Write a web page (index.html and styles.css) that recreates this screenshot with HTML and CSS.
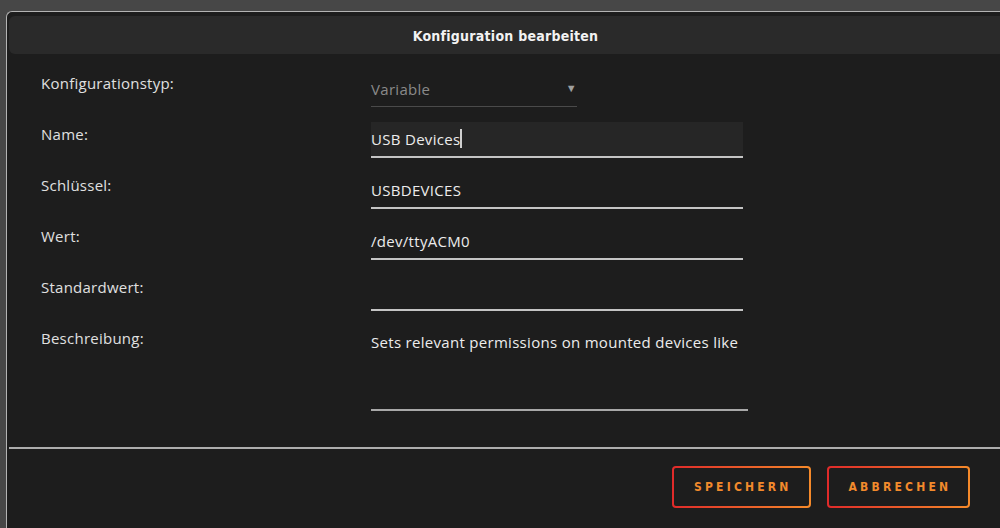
FILE: index.html
```html
<!DOCTYPE html>
<html lang="de">
<head>
<meta charset="utf-8">
<title>Konfiguration bearbeiten</title>
<link rel="stylesheet" href="styles.css">
</head>
<body>
  <div class="dialog">
    <div class="dialog-header">Konfiguration bearbeiten</div>
    <form class="form">
      <div class="row">
        <label class="label">Konfigurationstyp:</label>
        <div class="field select">
          <span class="select-value">Variable</span>
          <span class="select-arrow">▼</span>
        </div>
      </div>
      <div class="row">
        <label class="label">Name:</label>
        <div class="field input focused"><span>USB Devices</span><span class="caret"></span></div>
      </div>
      <div class="row">
        <label class="label">Schlüssel:</label>
        <div class="field input">USBDEVICES</div>
      </div>
      <div class="row">
        <label class="label">Wert:</label>
        <div class="field input">/dev/ttyACM0</div>
      </div>
      <div class="row">
        <label class="label">Standardwert:</label>
        <div class="field input"></div>
      </div>
      <div class="row">
        <label class="label">Beschreibung:</label>
        <div class="field textarea">Sets relevant permissions on mounted devices like</div>
      </div>
    </form>
    <div class="divider"></div>
    <div class="actions">
      <button class="btn" type="button"><span>SPEICHERN</span></button>
      <button class="btn" type="button"><span>ABBRECHEN</span></button>
    </div>
  </div>
</body>
</html>
```

FILE: styles.css
```css
html, body {
  margin: 0;
  height: 100%;
}

body {
  background: #474747;
  overflow: hidden;
  padding: 11px 0 0 6px;
  box-sizing: border-box;
  font-family: "Open Sans", "Noto Sans", sans-serif;
  color: #e2e2e2;
}

.dialog {
  width: 1010px;
  height: 530px;
  box-sizing: border-box;
  background: #1d1d1d;
  border-top: 1.5px solid #b4b4b4;
  border-left: 1.5px solid #b4b4b4;
  border-top-left-radius: 6px;
  padding: 4px 0 0 2px;
}

.dialog-header {
  height: 38px;
  background: #2a2a2a;
  border-radius: 6px;
  display: flex;
  align-items: center;
  justify-content: center;
  padding: 2px 14px 0 0;
  box-sizing: border-box;
  font-family: "DejaVu Sans Condensed", "DejaVu Sans", sans-serif;
  font-weight: bold;
  font-size: 14px;
  letter-spacing: 0.25px;
  color: #f2f2f2;
}

.form {
  display: flex;
  flex-direction: column;
  gap: 15px;
  padding: 17px 0 0 32px;
}

.row {
  display: flex;
  align-items: flex-start;
}

.label {
  width: 330px;
  flex: none;
  font-size: 15px;
  letter-spacing: 0.25px;
  line-height: 22px;
  padding-top: 0.5px;
  color: #e0e0e0;
}

.field {
  box-sizing: border-box;
  height: 36px;
  width: 372px;
  display: flex;
  align-items: center;
  font-size: 15px;
  letter-spacing: 0.3px;
  color: #ececec;
  border-bottom: 2px solid #c4c4c4;
  padding-bottom: 1px;
}

.select {
  width: 206px;
  border-bottom: 1px solid #4a4a4a;
  justify-content: space-between;
  padding: 1px 0 0 0;
}

.select-value {
  color: #8a8a8a;
}

.select-arrow {
  font-size: 11px;
  color: #a0a0a0;
  padding-bottom: 4px;
}

.focused {
  background: #262626;
}

.caret {
  width: 2px;
  height: 19px;
  background: #cfcfcf;
  margin-left: 0;
}

.textarea {
  width: 377px;
  height: 85px;
  align-items: flex-start;
  padding-top: 6px;
  border-bottom-color: #a8a8a8;
}

.divider {
  height: 2px;
  background: #adadad;
  margin-top: 36px;
}

.actions {
  display: flex;
  gap: 16px;
  padding: 17px 0 0 663px;
}

.btn {
  height: 42px;
  padding: 2px;
  border: none;
  border-radius: 4px;
  background: linear-gradient(90deg, #e02a2a, #f58a2a);
  cursor: pointer;
}

.btn span {
  display: flex;
  align-items: center;
  justify-content: center;
  height: 100%;
  border-radius: 2px;
  background: #1d1d1d;
  padding: 0 17px 0 20px;
  font-family: "DejaVu Sans Condensed", "DejaVu Sans", sans-serif;
  font-weight: bold;
  font-size: 12px;
  letter-spacing: 3.2px;
  color: #f28a2c;
}
```
